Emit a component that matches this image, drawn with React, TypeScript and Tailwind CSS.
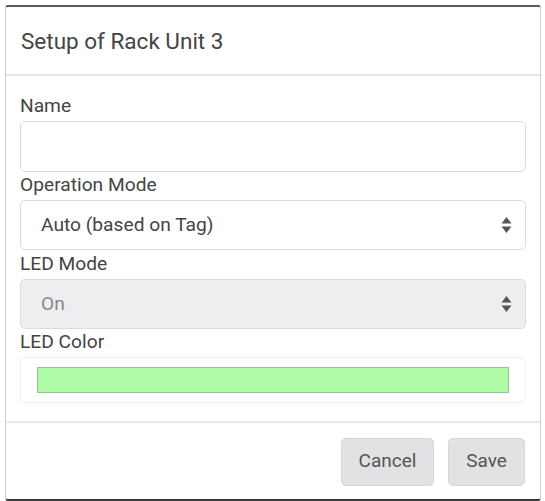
function Arrows() {
  return (
    <svg width="11" height="18" viewBox="0 0 11 18" className="shrink-0">
      <path d="M5.5 1 L10.5 7.5 L0.5 7.5 Z" fill="#555" />
      <path d="M5.5 17 L10.5 10.5 L0.5 10.5 Z" fill="#555" />
    </svg>
  );
}

function Label({ children }: { children: React.ReactNode }) {
  return <div className="text-[19.2px] leading-[22px] text-[#444] mb-[4px]">{children}</div>;
}

function Select({ value, disabled }: { value: string; disabled?: boolean }) {
  return (
    <div
      className={`h-[50px] rounded-[5px] border border-[#dcdcdc] flex items-center justify-between pl-[20px] pr-[13px] text-[19.2px] ${
        disabled ? 'bg-[#eeedef] text-[#888]' : 'bg-white text-[#444]'
      }`}
    >
      <span>{value}</span>
      <Arrows />
    </div>
  );
}

export default function App() {
  return (
    <div className="w-[545px] h-[501px] bg-white pl-[5px] pt-[5px] pr-[4px] font-['Roboto',sans-serif]">
      <div className="h-full flex flex-col bg-white border-t-2 border-b-2 border-t-[#5a5a5a] border-b-[#3a3a3a] border-x border-x-[#cfcfcf] rounded-[3px]">
        {/* Header */}
        <div className="h-[69px] flex items-center px-[15px] border-b-2 border-[#e6e6e6]">
          <h1 className="text-[22.5px] text-[#444] pt-[3px]">Setup of Rack Unit 3</h1>
        </div>

        {/* Body */}
        <div className="flex flex-col px-[14px] pt-[19px] pb-[18px] border-b-2 border-[#e9e9e9]">
          <Label>Name</Label>
          <div className="h-[51px] rounded-[5px] border border-[#dcdcdc] bg-white mb-[2px]" />

          <Label>Operation Mode</Label>
          <div className="mb-[3px]">
            <Select value="Auto (based on Tag)" />
          </div>

          <Label>LED Mode</Label>
          <div className="mb-[2px]">
            <Select value="On" disabled />
          </div>

          <Label>LED Color</Label>
          <div className="h-[46px] rounded-[5px] border border-[#f0f0f0] flex items-center px-[16px]">
            <div className="w-full h-[26px] bg-[#aefca6] border border-[#98c493]" />
          </div>
        </div>

        {/* Footer */}
        <div className="flex-1 flex items-center justify-end gap-[14px] pr-[15px] pt-[1px]">
          <button className="h-[48px] w-[93px] rounded-[5px] bg-[#e2e1e3] border border-[#d6d6d6] text-[19px] text-[#555]">
            Cancel
          </button>
          <button className="h-[48px] w-[77px] rounded-[5px] bg-[#e2e1e3] border border-[#d6d6d6] text-[19px] text-[#555]">
            Save
          </button>
        </div>
      </div>
    </div>
  );
}
